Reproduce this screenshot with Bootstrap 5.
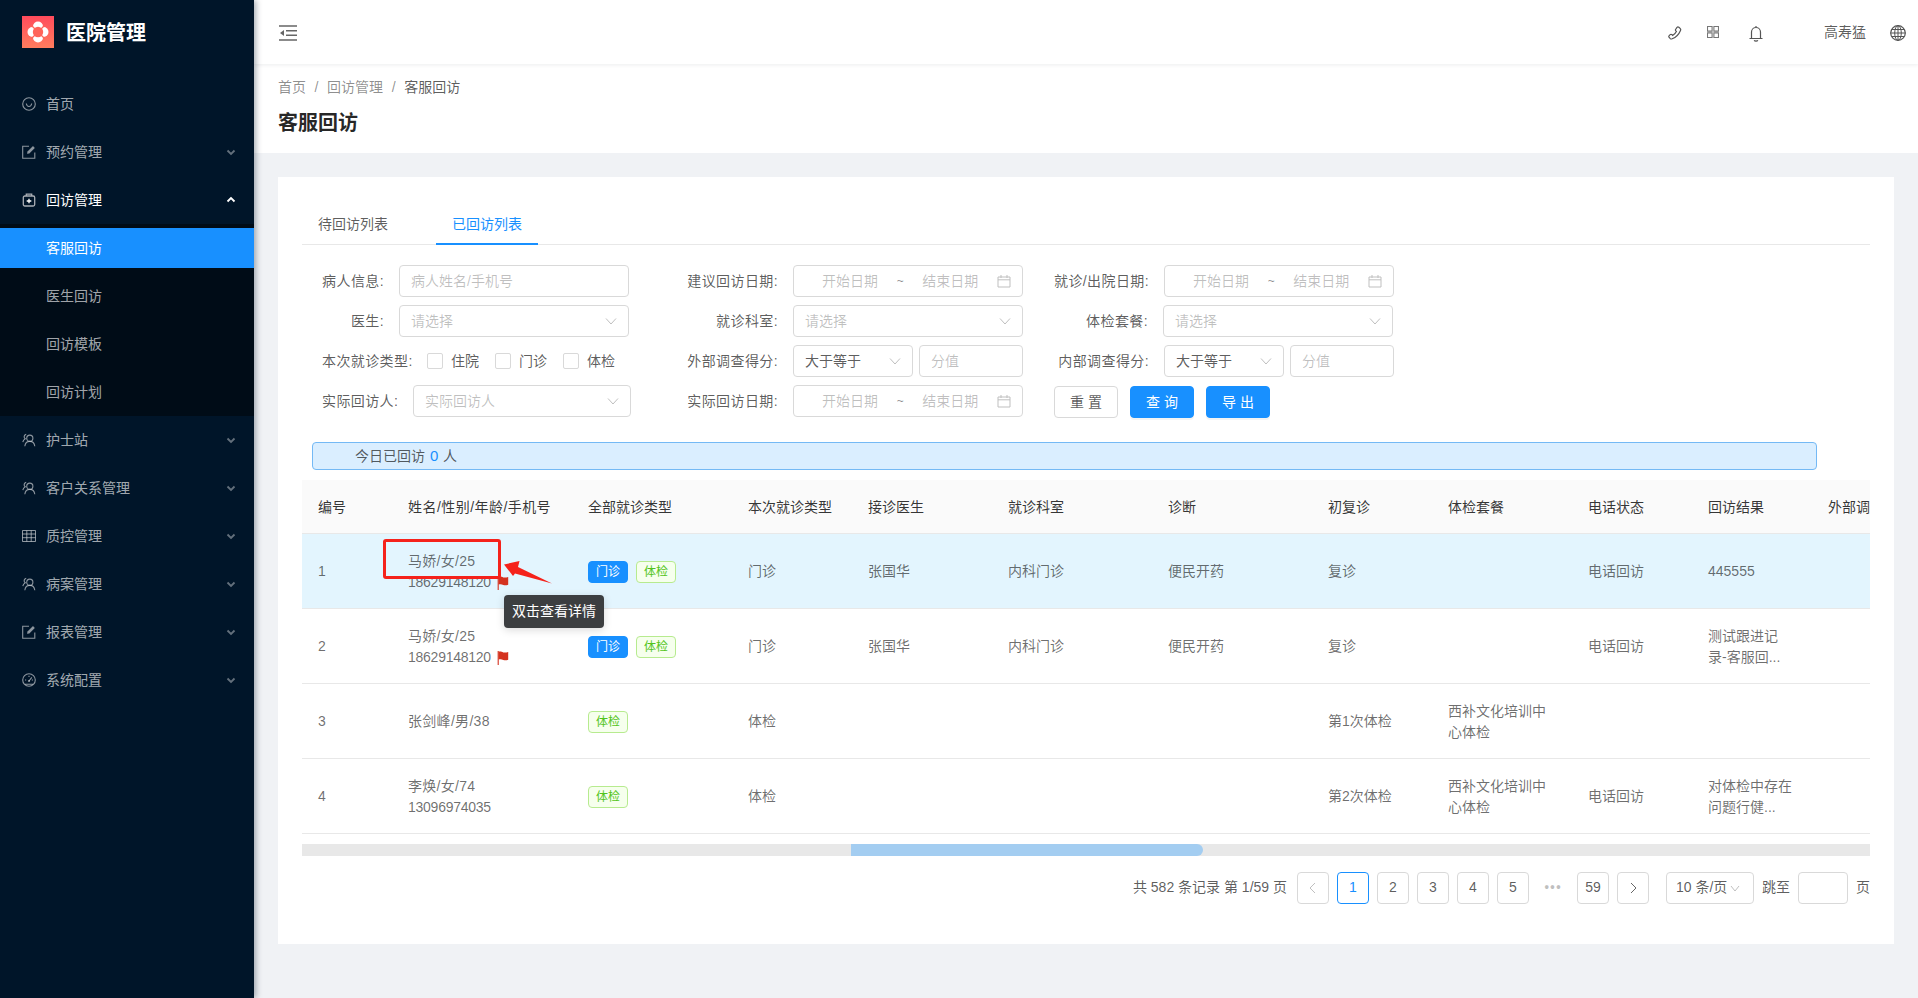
<!DOCTYPE html>
<html lang="zh-CN">
<head>
<meta charset="utf-8">
<title>客服回访</title>
<link rel="stylesheet" href="https://cdn.jsdelivr.net/npm/bootstrap@5.3.0/dist/css/bootstrap.min.css">
<style>
html,body{height:100%}
body{font-family:"Liberation Sans","Noto Sans CJK SC",sans-serif;font-size:14px;color:rgba(0,0,0,.65);background:#f0f2f5;overflow:hidden}
.app-shell{height:998px}
.side{width:254px;flex:none;background:#001529;color:rgba(255,255,255,.65);box-shadow:2px 0 6px rgba(0,21,41,.35);position:relative;z-index:3}
.brand{height:64px;padding:16px 0 0 22px;color:#fff;font-size:20px;font-weight:700;line-height:35px;margin-bottom:20px}
.brand svg{margin-right:12px}
.menu-row{height:40px;margin-bottom:8px;padding-left:22px;padding-right:22px;color:rgba(255,255,255,.65);font-size:14px;line-height:40px}
.menu-row .ico{width:14px;height:14px;margin-right:10px;flex:none;opacity:.85}
.menu-row .caret-ic{width:10px;height:10px;margin-left:auto;margin-right:-4px;opacity:.6}
.menu-row.open{color:#fff;margin-bottom:4px}
.menu-row.open .caret-ic,.menu-row.open .ico{opacity:1}
.sub-wrap{background:#000c17;padding:4px 0;margin-bottom:4px}
.sub-row{height:40px;line-height:40px;padding-left:46px;margin-bottom:8px;color:rgba(255,255,255,.65)}
.sub-row:last-child{margin-bottom:0}
.sub-row.on{background:#1890ff;color:#fff}
.main-col{min-width:0}
.topbar{height:64px;background:#fff;box-shadow:0 1px 4px rgba(0,21,41,.08);padding-left:25px;position:relative;z-index:2}
.topbar .grow{flex:1}
.topic{color:#666;flex:none}
.ic-collapse{margin-top:2px}
.ic-phone{margin-top:2px}
.ic-grid{margin-left:25px}
.ic-bell{margin-left:30px;margin-top:2px}
.ic-globe{margin-left:24px;margin-right:12px;margin-top:2px}
.user-name{color:rgba(0,0,0,.65);width:42px;margin-left:61px;white-space:nowrap}
.titlebar{background:#fff;height:89px;padding:0 24px}
.crumbs{padding-top:13px;line-height:20px;color:rgba(0,0,0,.45)}
.crumbs i{font-style:normal;margin:0 8.6px}
.crumbs b{font-weight:400;color:rgba(0,0,0,.65)}
.pagehead{margin:12px 0 0;font-size:20px;font-weight:600;line-height:28px;color:rgba(0,0,0,.85)}
.panel{margin:24px 24px 0;width:1616px;height:767px;background:#fff;padding:24px 24px 0;position:relative}
.tabbar{height:44px;border-bottom:1px solid #e8e8e8;gap:32px}
.tabbar span{padding:0 16px;line-height:46px;height:44px;color:rgba(0,0,0,.65)}
.tabbar span.cur{color:#1890ff;border-bottom:2px solid #1890ff}
.filters{display:grid;grid-template-columns:356px 376px 340px;row-gap:8px;padding-left:20px;margin-top:20px;grid-auto-rows:32px}
.fcell{display:flex;align-items:center;white-space:nowrap}
.fcell>label{flex:none;margin-right:15px;color:rgba(0,0,0,.65);text-align:right;margin-bottom:0;letter-spacing:.4px}
.w62{width:62px}.w90{width:90px}.w76{width:76px}.w100{width:100px}.w95{width:95px}.w94{width:94px}
.fake{height:32px;border:1px solid #d9d9d9;border-radius:4px;background:#fff;padding:0 11px;color:rgba(0,0,0,.25);display:flex;align-items:center;justify-content:space-between;font-size:14px}
.fake.val{color:rgba(0,0,0,.65)}
.w230{width:230px}.w218{width:218px}.w120{width:120px}.w104{width:104px;margin-left:6px}
.fake svg{flex:none;color:#bfbfbf}
.date-a{margin-left:17px}.date-t{color:rgba(0,0,0,.45);font-size:12px}
.cbx{width:16px;height:16px;border:1px solid #d9d9d9;border-radius:2px;margin-right:8px;flex:none}
.cbtxt{width:28px;margin-right:16px}
.btn-a,.btn-a:hover{height:32px;font-size:14px;padding:0 0 0 4px;width:64px;border-radius:4px;letter-spacing:4px;line-height:30px;border:1px solid #d9d9d9;color:rgba(0,0,0,.65);background:#fff;margin-top:2px}
.btn-a.pri,.btn-a.pri:hover{background:#1890ff;border-color:#1890ff;color:#fff;box-shadow:0 2px 0 rgba(0,0,0,.045)}
.btns{gap:12px}
.notice{margin:25px 0 10px 10px;width:1505px;height:28px;background:#daeeff;border:1px solid #74b9f5;border-radius:4px;padding-left:42px;line-height:26px;color:rgba(0,0,0,.65)}
.notice em{font-style:normal;color:#1890ff;font-size:15px;font-weight:500;margin:0 1px}
.tbl-clip{width:1568px;overflow:hidden}
.tbl-clip .table{width:1630px;table-layout:fixed;margin:0;font-size:14px;--bs-table-bg:transparent;--bs-table-color:rgba(0,0,0,.65)}
.tbl-clip th{height:53px;background:#fafafa;font-weight:400;color:rgba(0,0,0,.8);padding:2px 16px 0;vertical-align:middle;border-bottom:1px solid #e8e8e8;white-space:nowrap}
.tbl-clip th:nth-child(2){letter-spacing:.45px}
.tbl-clip td{height:75px;padding:2px 16px 0;vertical-align:middle;line-height:21px;border-bottom:1px solid #e8e8e8;color:rgba(0,0,0,.58)}
.tbl-clip td:nth-child(2){letter-spacing:.3px}
.tbl-clip tr.hl td{background:#e3f5fe}
.c90{width:90px}.c120{width:120px}.c140{width:140px}.c160{width:160px}.c180{width:180px}
.tbl-clip td .num{letter-spacing:-.25px}
.flagi{margin-left:6px;vertical-align:-3px}
.chip{display:inline-block;width:40px;height:22px;line-height:20px;text-align:center;border-radius:4px;font-size:12px;border:1px solid #1890ff;background:#1890ff;color:#fff;margin-right:8px}
.chip.g{background:#f6ffed;border-color:#b7eb8f;color:#52c41a}
.hbar{height:12px;background:#e8e8e8;margin-top:10px;width:1568px}
.hbar div{height:12px;width:352px;margin-left:549px;background:#a3cdf1;border-radius:0 6px 6px 0}
.pager{margin-top:16px;gap:8px;width:1568px;height:32px}
.pg{width:32px;height:32px;border:1px solid #d9d9d9;border-radius:4px;display:flex;align-items:center;justify-content:center;color:rgba(0,0,0,.65);flex:none}
.pg.cur{border-color:#1890ff;color:#1890ff}
.pg.none{border:0;color:rgba(0,0,0,.25);letter-spacing:1px}
.pg-total{margin-right:2px}
.pg-size{width:88px;height:32px;border:1px solid #d9d9d9;border-radius:4px;padding-left:9px;margin-left:9px;display:flex;align-items:center;flex:none;white-space:nowrap}
.pg-size svg{margin-left:3px}
.pg-in{width:50px;height:32px;border:1px solid #d9d9d9;border-radius:4px;flex:none}
.mark-box{position:absolute;left:105px;top:362px;width:118px;height:40px;border:3px solid #f5221b;border-radius:3px}
.mark-arrow{position:absolute;left:226px;top:384px}
.tip-pop{position:absolute;left:226px;top:418px;width:100px;height:33px;background:#3c3e40;border-radius:4px;color:#fff;text-align:center;line-height:33px;font-size:14px;box-shadow:0 2px 8px rgba(0,0,0,.15)}
.tip-pop::after{content:"";position:absolute;left:46px;bottom:-3px;width:8px;height:8px;background:#3c3e40;transform:rotate(45deg);border-radius:1px;z-index:-1}
</style>
</head>
<body>
<svg width="0" height="0" class="d-block position-absolute">
<defs>
<linearGradient id="lg" x1="0" y1="0" x2="0" y2="1"><stop offset="0" stop-color="#ff4b5c"/><stop offset="1" stop-color="#ff7d5e"/></linearGradient>
<symbol id="i-down" viewBox="0 0 10 10"><path d="M1.500 3.500 5 7 8.500 3.500" fill="none" stroke="currentColor" stroke-width="1.800"/></symbol>
<symbol id="i-up" viewBox="0 0 10 10"><path d="M1.500 6.500 5 3 8.500 6.500" fill="none" stroke="currentColor" stroke-width="1.800"/></symbol>
<symbol id="i-edit" viewBox="0 0 14 14"><path d="M7 1.200H.7v12.100h12.100V7.500" fill="none" stroke="currentColor" stroke-width="1.100"/><path d="M5 8.800 5.500 6.600 11 1.100l1.800 1.800-5.500 5.500z" fill="currentColor"/></symbol>
<symbol id="i-user" viewBox="0 0 14 14"><circle cx="7.800" cy="5.200" r="3.100" fill="none" stroke="currentColor" stroke-width="1.100"/><path d="M2.800 13.200c.4-3 2.300-4.800 5-4.800s4.600 1.800 5 4.800" fill="none" stroke="currentColor" stroke-width="1.100"/><path d="M4.200 1.400C2.800 1.600 2 2.900 2.200 4.200c.1.700.5 1.200 1 1.600C2 6.600 1.100 7.700.8 9.200" fill="none" stroke="currentColor" stroke-width="1.100"/></symbol>
<symbol id="i-cal" viewBox="0 0 14 14"><path d="M1 3h12v10H1zM1 5.800h12M4 1v3M10 1v3" fill="none" stroke="currentColor"/></symbol>
<symbol id="i-chev" viewBox="0 0 12 12"><path d="M1 3.500 6 9l5-5.500" fill="none" stroke="currentColor"/></symbol>
<symbol id="i-flag" viewBox="0 0 12 14"><path d="M1.200 0v14" stroke="#d4321f" stroke-width="1.100"/><path d="M1.500.8c2-.7 3.200.2 4.800.6 1.700.4 3 .1 4.900-.5v7.800c-2 .7-3.300.7-4.900.2-1.600-.5-2.800-1-4.800-.3z" fill="#d4321f"/></symbol>
</defs>
</svg>
<div class="d-flex app-shell">
  <aside class="side">
    <div class="brand d-flex">
      <svg width="32" height="32" viewBox="0 0 32 32"><rect width="32" height="32" fill="url(#lg)"/><g fill="#fff"><circle cx="16" cy="10.500" r="5"/><circle cx="16" cy="21.500" r="5"/><circle cx="10.500" cy="16" r="5"/><circle cx="21.500" cy="16" r="5"/></g><circle cx="16" cy="16" r="5.200" fill="#ff6459"/><path d="M9.500 9.500 13 13M22.500 9.500 19 13M9.500 22.500 13 19M22.500 22.500 19 19" stroke="#ff6459" stroke-width="1.300"/></svg>
      <span>医院管理</span>
    </div>
    <div class="menu-row d-flex align-items-center"><svg class="ico" viewBox="0 0 14 14"><circle cx="7" cy="7" r="6.300" fill="none" stroke="currentColor" stroke-width="1.100"/><path d="M4.300 6.500c.4 2.200 1.400 3 2.700 3s2.300-.8 2.700-3" fill="none" stroke="currentColor" stroke-width="1.100"/></svg><span>首页</span></div>
    <div class="menu-row d-flex align-items-center"><svg class="ico"><use href="#i-edit"/></svg><span>预约管理</span><svg class="caret-ic"><use href="#i-down"/></svg></div>
    <div class="menu-row open d-flex align-items-center"><svg class="ico" viewBox="0 0 14 14"><path d="M4.300 3V1.200h5.400V3" fill="none" stroke="#a9aeb5" stroke-width="1.300"/><rect x="1.300" y="3" width="11.400" height="10" rx="1.500" fill="none" stroke="#a9aeb5" stroke-width="1.300"/><path d="M7 5.700v4.600M4.700 8h4.600" stroke="#fff" stroke-width="1.300"/></svg><span>回访管理</span><svg class="caret-ic"><use href="#i-up"/></svg></div>
    <div class="sub-wrap">
      <div class="sub-row on">客服回访</div>
      <div class="sub-row">医生回访</div>
      <div class="sub-row">回访模板</div>
      <div class="sub-row">回访计划</div>
    </div>
    <div class="menu-row d-flex align-items-center"><svg class="ico"><use href="#i-user"/></svg><span>护士站</span><svg class="caret-ic"><use href="#i-down"/></svg></div>
    <div class="menu-row d-flex align-items-center"><svg class="ico"><use href="#i-user"/></svg><span>客户关系管理</span><svg class="caret-ic"><use href="#i-down"/></svg></div>
    <div class="menu-row d-flex align-items-center"><svg class="ico" viewBox="0 0 14 14"><path d="M.5 1.500h13v11H.5zM.5 5h13M.5 8.700h13M4.800 1.500v11M9.200 1.500v11" fill="none" stroke="currentColor"/></svg><span>质控管理</span><svg class="caret-ic"><use href="#i-down"/></svg></div>
    <div class="menu-row d-flex align-items-center"><svg class="ico"><use href="#i-user"/></svg><span>病案管理</span><svg class="caret-ic"><use href="#i-down"/></svg></div>
    <div class="menu-row d-flex align-items-center"><svg class="ico"><use href="#i-edit"/></svg><span>报表管理</span><svg class="caret-ic"><use href="#i-down"/></svg></div>
    <div class="menu-row d-flex align-items-center"><svg class="ico" viewBox="0 0 14 14"><circle cx="7" cy="7" r="6.300" fill="none" stroke="currentColor" stroke-width="1.100"/><path d="M3 11.300h8M7 8 9.800 4.300M7 2.800v1.200M3 7H4.200M9.800 7H11" fill="none" stroke="currentColor" stroke-width="1.100"/><circle cx="7" cy="8" r="1.100" fill="currentColor"/></svg><span>系统配置</span><svg class="caret-ic"><use href="#i-down"/></svg></div>
  </aside>
  <div class="main-col flex-grow-1 d-flex flex-column">
    <header class="topbar d-flex align-items-center">
      <svg width="18" height="16" viewBox="0 0 18 16" class="topic ic-collapse"><path d="M0 1h18M7 5.700h11M7 10.300h11M0 15h18" stroke="#666" stroke-width="1.600" fill="none"/><path d="M5 5v6L1 8z" fill="#666"/></svg>
      <span class="grow"></span>
      <svg width="14" height="14" viewBox="0 0 14 14" class="topic ic-phone"><path d="M9 1.300c.6-.6 1.300-.6 1.900 0l1.400 1.300c.5.500.6 1 .2 1.800C11 8 7.800 11.300 4.200 12.800c-.8.300-1.400.3-1.900-.2L1.200 11.400c-.5-.5-.5-1.200 0-1.700l1-1c.5-.5 1.200-.5 1.700 0l.7.700c1.500-.9 3-2.400 3.800-4l-.6-.6c-.5-.5-.5-1.300 0-1.700z" fill="none" stroke="#555" stroke-width="1.200"/></svg>
      <svg width="12" height="12" viewBox="0 0 12 12" class="topic ic-grid"><path d="M.5.500h4.600v4.600H.5zM6.900.500h4.600v4.600H6.900zM.5 6.900h4.600v4.600H.5zM6.900 6.900h4.600v4.600H6.900z" fill="none" stroke="#777" stroke-width="1.100"/></svg>
      <svg width="14" height="17" viewBox="0 0 14 17" class="topic ic-bell"><path d="M2.500 13.500V7a4.500 4.500 0 0 1 9 0v6.500M.5 13.500h13M5.200 15.200c.5 1.100 3.100 1.100 3.600 0M7 1v1.500" fill="none" stroke="#555" stroke-width="1.200"/></svg>
      <span class="user-name">高寿猛</span>
      <svg width="16" height="16" viewBox="0 0 16 16" class="topic ic-globe"><circle cx="8" cy="8" r="7.300" fill="none" stroke="#555" stroke-width="1.200"/><ellipse cx="8" cy="8" rx="3.300" ry="7.300" fill="none" stroke="#555"/><path d="M8 .7v14.600M.7 8h14.600M1.700 4.500h12.600M1.700 11.500h12.600" stroke="#555" fill="none"/></svg>
    </header>
    <section class="titlebar">
      <div class="crumbs"><span>首页</span><i>/</i><span>回访管理</span><i>/</i><b>客服回访</b></div>
      <h1 class="pagehead">客服回访</h1>
    </section>
    <main class="panel">
      <div class="tabbar d-flex"><span>待回访列表</span><span class="cur">已回访列表</span></div>
      <div class="filters">
        <div class="fcell"><label class="w62">病人信息:</label><div class="fake w230">病人姓名/手机号</div></div>
        <div class="fcell"><label class="w100">建议回访日期:</label><div class="fake w230"><span class="date-a">开始日期</span><span class="date-t">~</span><span>结束日期</span><svg width="14" height="14"><use href="#i-cal"/></svg></div></div>
        <div class="fcell"><label class="w95">就诊/出院日期:</label><div class="fake w230"><span class="date-a">开始日期</span><span class="date-t">~</span><span>结束日期</span><svg width="14" height="14"><use href="#i-cal"/></svg></div></div>

        <div class="fcell"><label class="w62">医生:</label><div class="fake w230"><span>请选择</span><svg width="12" height="12"><use href="#i-chev"/></svg></div></div>
        <div class="fcell"><label class="w100">就诊科室:</label><div class="fake w230"><span>请选择</span><svg width="12" height="12"><use href="#i-chev"/></svg></div></div>
        <div class="fcell"><label class="w94">体检套餐:</label><div class="fake w230"><span>请选择</span><svg width="12" height="12"><use href="#i-chev"/></svg></div></div>

        <div class="fcell"><label class="w90">本次就诊类型:</label><span class="cbx"></span><span class="cbtxt">住院</span><span class="cbx"></span><span class="cbtxt">门诊</span><span class="cbx"></span><span class="cbtxt">体检</span></div>
        <div class="fcell"><label class="w100">外部调查得分:</label><div class="fake val w120"><span>大于等于</span><svg width="12" height="12"><use href="#i-chev"/></svg></div><div class="fake w104">分值</div></div>
        <div class="fcell"><label class="w95">内部调查得分:</label><div class="fake val w120"><span>大于等于</span><svg width="12" height="12"><use href="#i-chev"/></svg></div><div class="fake w104">分值</div></div>

        <div class="fcell"><label class="w76">实际回访人:</label><div class="fake w218"><span>实际回访人</span><svg width="12" height="12"><use href="#i-chev"/></svg></div></div>
        <div class="fcell"><label class="w100">实际回访日期:</label><div class="fake w230"><span class="date-a">开始日期</span><span class="date-t">~</span><span>结束日期</span><svg width="14" height="14"><use href="#i-cal"/></svg></div></div>
        <div class="fcell btns"><button type="button" class="btn btn-a">重置</button><button type="button" class="btn btn-a pri">查询</button><button type="button" class="btn btn-a pri">导出</button></div>
      </div>
      <div class="notice">今日已回访 <em>0</em> 人</div>
      <div class="tbl-clip">
        <table class="table">
          <colgroup><col class="c90"><col class="c180"><col class="c160"><col class="c120"><col class="c140"><col class="c160"><col class="c160"><col class="c120"><col class="c140"><col class="c120"><col class="c120"><col class="c120"></colgroup>
          <thead><tr><th>编号</th><th>姓名/性别/年龄/手机号</th><th>全部就诊类型</th><th>本次就诊类型</th><th>接诊医生</th><th>就诊科室</th><th>诊断</th><th>初复诊</th><th>体检套餐</th><th>电话状态</th><th>回访结果</th><th>外部调查得分</th></tr></thead>
          <tbody>
            <tr class="hl"><td>1</td><td>马娇/女/25<br><span class="num">18629148120</span><svg class="flagi" width="12" height="14"><use href="#i-flag"/></svg></td><td><span class="chip">门诊</span><span class="chip g">体检</span></td><td>门诊</td><td>张国华</td><td>内科门诊</td><td>便民开药</td><td>复诊</td><td></td><td>电话回访</td><td>445555</td><td></td></tr>
            <tr><td>2</td><td>马娇/女/25<br><span class="num">18629148120</span><svg class="flagi" width="12" height="14"><use href="#i-flag"/></svg></td><td><span class="chip">门诊</span><span class="chip g">体检</span></td><td>门诊</td><td>张国华</td><td>内科门诊</td><td>便民开药</td><td>复诊</td><td></td><td>电话回访</td><td>测试跟进记<br>录-客服回...</td><td></td></tr>
            <tr><td>3</td><td>张剑峰/男/38</td><td><span class="chip g">体检</span></td><td>体检</td><td></td><td></td><td></td><td>第1次体检</td><td>西补文化培训中<br>心体检</td><td></td><td></td><td></td></tr>
            <tr><td>4</td><td>李焕/女/74<br><span class="num">13096974035</span></td><td><span class="chip g">体检</span></td><td>体检</td><td></td><td></td><td></td><td>第2次体检</td><td>西补文化培训中<br>心体检</td><td>电话回访</td><td>对体检中存在<br>问题行健...</td><td></td></tr>
          </tbody>
        </table>
      </div>
      <div class="hbar"><div></div></div>
      <div class="pager d-flex align-items-center justify-content-end">
        <span class="pg-total">共 582 条记录 第 1/59 页</span>
        <span class="pg"><svg width="10" height="12" viewBox="0 0 10 12"><path d="M7 1 2 6l5 5" fill="none" stroke="#bfbfbf"/></svg></span>
        <span class="pg cur">1</span><span class="pg">2</span><span class="pg">3</span><span class="pg">4</span><span class="pg">5</span><span class="pg none">•••</span><span class="pg">59</span>
        <span class="pg"><svg width="10" height="12" viewBox="0 0 10 12"><path d="M3 1l5 5-5 5" fill="none" stroke="#666"/></svg></span>
        <span class="pg-size">10 条/页<svg width="10" height="10" viewBox="0 0 10 10"><path d="M1 3l4 5 4-5" fill="none" stroke="#bfbfbf"/></svg></span>
        <span>跳至</span><span class="pg-in"></span><span>页</span>
      </div>
      <div class="mark-box"></div>
      <svg class="mark-arrow" width="52" height="24" viewBox="0 0 52 24"><path d="M0 3.500 15.500 0 14 6 48 22.500 11 12.500 9 15Z" fill="#f5221b"/></svg>
      <div class="tip-pop">双击查看详情</div>
    </main>
  </div>
</div>
<script src="https://cdn.jsdelivr.net/npm/bootstrap@5.3.0/dist/js/bootstrap.bundle.min.js"></script>
</body>
</html>
